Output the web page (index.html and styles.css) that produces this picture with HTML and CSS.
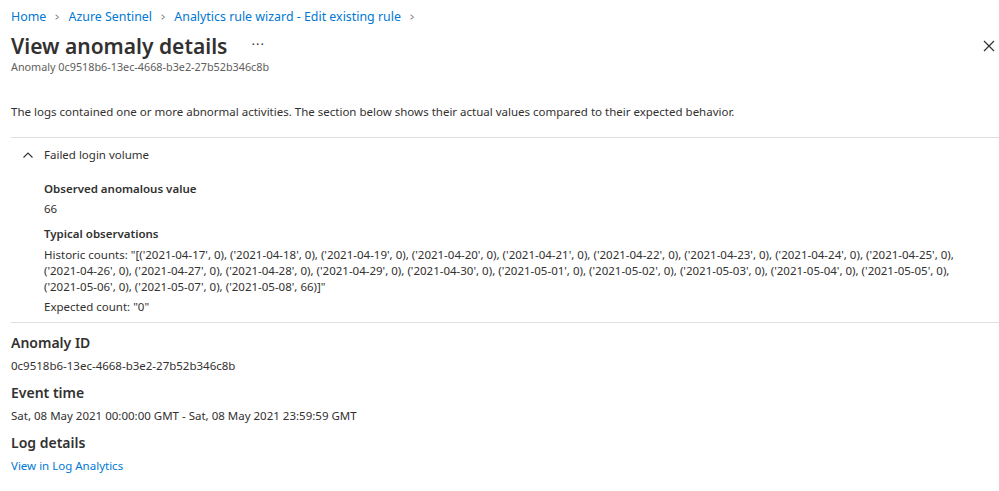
FILE: index.html
```html
<!DOCTYPE html>
<html lang="en">
<head>
    <meta charset="UTF-8">
    <title>View anomaly details</title>
    <link rel="stylesheet" href="styles.css">
</head>
<body>
    <nav class="crumbs">
        <a href="#">Home</a><span class="sep">&gt;</span>
        <a href="#">Azure Sentinel</a><span class="sep">&gt;</span>
        <a href="#">Analytics rule wizard - Edit existing rule</a><span class="sep">&gt;</span>
    </nav>

    <header class="head">
        <div class="title-row">
            <h1>View anomaly details</h1>
            <span class="more">&middot;&middot;&middot;</span>
        </div>
        <svg class="close" width="12" height="12" viewBox="0 0 12 12"><path d="M1 1L11 11M11 1L1 11" stroke="#323130" stroke-width="1.2" fill="none"/></svg>
    </header>
    <div class="subtitle">Anomaly 0c9518b6-13ec-4668-b3e2-27b52b346c8b</div>

    <p class="intro">The logs contained one or more abnormal activities. The section below shows their actual values compared to their expected behavior.</p>

    <section class="group">
        <div class="group-head">
            <svg width="12" height="12" viewBox="0 0 12 12"><path d="M1.5 8.5L6 4L10.5 8.5" stroke="#323130" stroke-width="1.1" fill="none"/></svg>
            <span>Failed login volume</span>
        </div>
        <div class="group-body">
            <div class="label">Observed anomalous value</div>
            <div class="value">66</div>
            <div class="label">Typical observations</div>
            <div class="value history">Historic counts: "[<span>('2021-04-17', 0),</span> <span>('2021-04-18', 0),</span> <span>('2021-04-19', 0),</span> <span>('2021-04-20', 0),</span> <span>('2021-04-21', 0),</span> <span>('2021-04-22', 0),</span> <span>('2021-04-23', 0),</span> <span>('2021-04-24', 0),</span> <span>('2021-04-25', 0),</span> <span>('2021-04-26', 0),</span> <span>('2021-04-27', 0),</span> <span>('2021-04-28', 0),</span> <span>('2021-04-29', 0),</span> <span>('2021-04-30', 0),</span> <span>('2021-05-01', 0),</span> <span>('2021-05-02', 0),</span> <span>('2021-05-03', 0),</span> <span>('2021-05-04', 0),</span> <span>('2021-05-05', 0),</span> <span>('2021-05-06', 0),</span> <span>('2021-05-07', 0),</span> <span>('2021-05-08', 66)]"</span></div>
            <div class="value">Expected count: "0"</div>
        </div>
    </section>

    <section class="facts">
        <h2>Anomaly ID</h2>
        <div class="fact">0c9518b6-13ec-4668-b3e2-27b52b346c8b</div>
        <h2>Event time</h2>
        <div class="fact">Sat, 08 May 2021 00:00:00 GMT - Sat, 08 May 2021 23:59:59 GMT</div>
        <h2>Log details</h2>
        <div class="fact"><a href="#">View in Log Analytics</a></div>
    </section>
</body>
</html>
```

FILE: styles.css
```css
body {
    margin: 0;
    padding: 0 0 0 11px;
    font-family: "Segoe UI", "Noto Sans", sans-serif;
    font-size: 11.5px;
    color: #323130;
    background: #fff;
}
a {
    color: #0078d4;
    text-decoration: none;
}
.crumbs {
    display: flex;
    align-items: center;
    height: 16px;
    padding-top: 8px;
    font-size: 12.4px;
}
.crumbs .sep {
    color: #605e5c;
    margin: 0 8px;
    font-size: 11px;
    transform: scaleX(0.6);
}
.head {
    display: flex;
    justify-content: space-between;
    align-items: center;
    padding-right: 4px;
    margin-top: 8px;
}
.title-row {
    display: flex;
    align-items: center;
}
h1 {
    margin: 0;
    font-size: 21px;
    font-weight: 600;
    line-height: 28px;
}
.more {
    margin-left: 24px;
    font-size: 13px;
    letter-spacing: 1px;
    position: relative;
    top: -2px;
}
.close {
    display: block;
}
.subtitle {
    font-size: 10.8px;
    color: #605e5c;
    line-height: 14px;
}
.intro {
    margin: 30px 0 0;
    line-height: 16px;
}
.group {
    margin-top: 17px;
    border-top: 1px solid #e1dfdd;
    border-bottom: 1px solid #e1dfdd;
    padding-bottom: 7px;
}
.group-head {
    display: flex;
    align-items: center;
    height: 33px;
    padding-left: 11px;
    gap: 10px;
}
.group-body {
    padding: 2px 12px 0 33px;
}
.label {
    font-weight: 600;
    margin-top: 9px;
    line-height: 16px;
}
.label:first-child {
    margin-top: 8px;
}
.value {
    margin-top: 4px;
    line-height: 16px;
}
.value.history {
    margin-top: 5px;
}
.history span {
    white-space: nowrap;
}
.facts {
    padding-top: 11px;
}
h2 {
    margin: 0;
    font-size: 14px;
    font-weight: 600;
    line-height: 18px;
}
.fact {
    margin: 6px 0 10px;
    line-height: 16px;
}
```
